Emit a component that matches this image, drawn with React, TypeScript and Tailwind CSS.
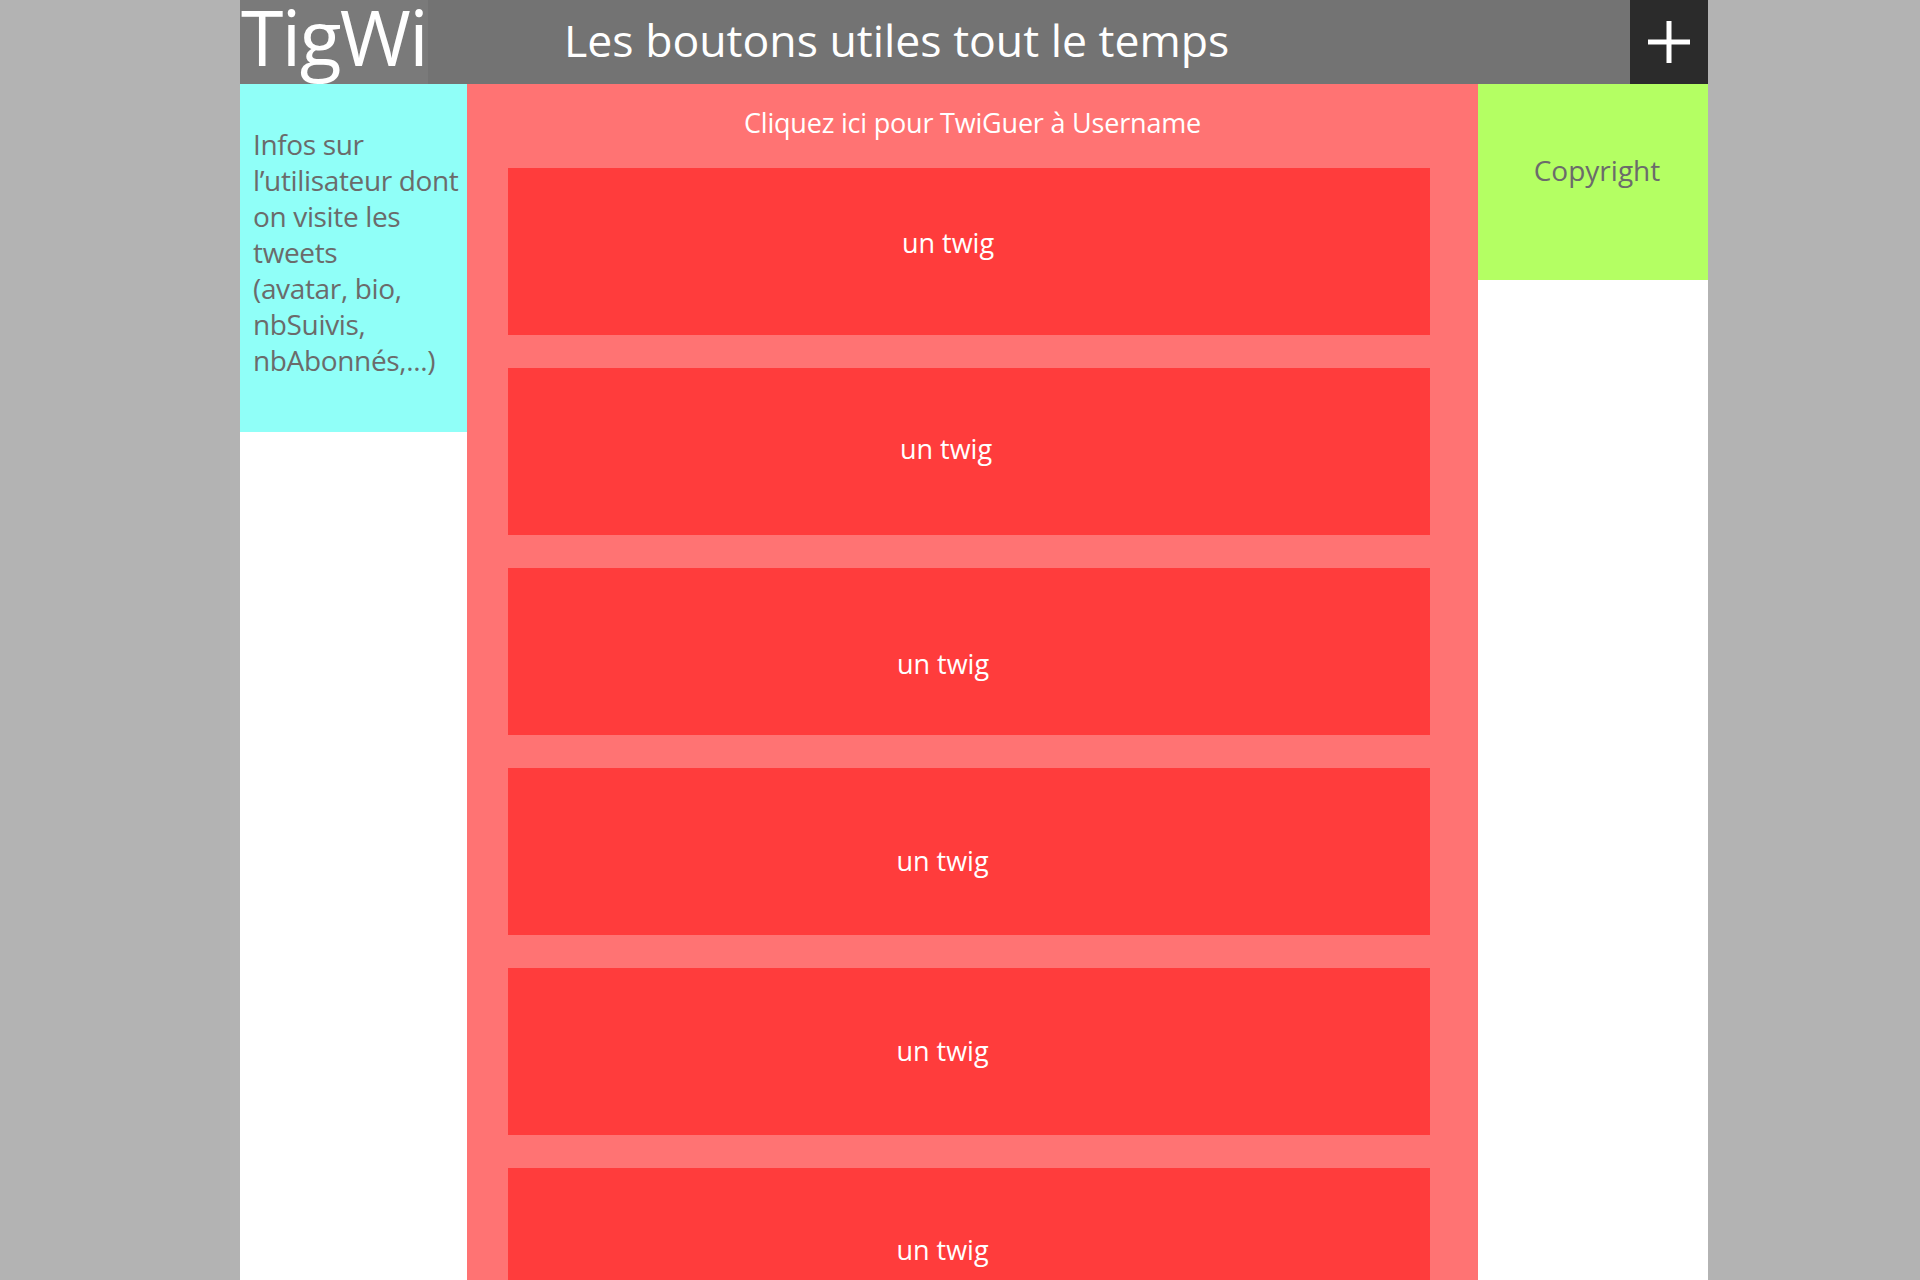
import React from "react";

const twigs = [
  { pt: "pt-[57px]", pr: "pr-[42px]" },
  { pt: "pt-[63px]", pr: "pr-[46px]" },
  { pt: "pt-[78px]", pr: "pr-[52px]" },
  { pt: "pt-[75px]", pr: "pr-[53px]" },
  { pt: "pt-[65px]", pr: "pr-[53px]" },
  { pt: "pt-[64px]", pr: "pr-[53px]" },
];

export default function App() {
  return (
    <div
      className="w-[1920px] h-[1280px] overflow-hidden bg-[#b3b3b3]"
      style={{ fontFamily: '"Open Sans", "Noto Sans", sans-serif' }}
    >
      <div className="ml-[240px] w-[1468px] h-[1280px] flex flex-col">
        {/* Header */}
        <div className="h-[84px] flex bg-[#737373] shrink-0">
          <div className="w-[188px] bg-[#7a7a7a] flex items-center pb-[10px] pl-[1px]">
            <span className="text-white text-[77px] leading-[74px] tracking-[-1.6px]">TigWi</span>
          </div>
          <div className="flex-1 flex items-center pl-[136px] pb-[4px]">
            <span className="text-white text-[44.6px] leading-none">Les boutons utiles tout le temps</span>
          </div>
          <div className="w-[78px] bg-[#2b2b2b] flex items-center justify-center">
            <svg width="42" height="42" viewBox="0 0 42 42">
              <rect x="18.5" y="0" width="5" height="42" fill="#ffffff" />
              <rect x="0" y="18.5" width="42" height="5" fill="#ffffff" />
            </svg>
          </div>
        </div>
        {/* Body */}
        <div className="flex flex-1 min-h-0">
          <div className="w-[227px] shrink-0 flex flex-col">
            <div className="h-[348px] bg-[#90fff8] pl-[13px] pt-[42px] text-[#6b6b6b] text-[28px] leading-[36px] tracking-[-0.35px]">
              <div>Infos sur</div>
              <div>l’utilisateur dont</div>
              <div>on visite les</div>
              <div>tweets</div>
              <div>(avatar, bio,</div>
              <div>nbSuivis,</div>
              <div>nbAbonnés,...)</div>
            </div>
            <div className="flex-1 bg-white" />
          </div>
          <div className="w-[1011px] shrink-0 bg-[#ff7373] flex flex-col pl-[41px] pr-[48px] pt-[21px] overflow-hidden">
            <div className="text-white text-[27px] leading-[36px] text-center pl-[7px] tracking-[-0.2px]">
              Cliquez ici pour TwiGuer à Username
            </div>
            <div className="mt-[27px] flex flex-col gap-[33px]">
              {twigs.map((t, i) => (
                <div
                  key={i}
                  className={`h-[167px] shrink-0 bg-[#ff3c3c] text-white text-[27px] leading-[36px] text-center ${t.pt} ${t.pr}`}
                >
                  un twig
                </div>
              ))}
            </div>
          </div>
          <div className="w-[230px] shrink-0 flex flex-col">
            <div className="h-[196px] bg-[#b4ff63] flex justify-center pt-[68px] pl-[8px] text-[#6b6b6b] text-[28px] leading-[36px]">
              Copyright
            </div>
            <div className="flex-1 bg-white" />
          </div>
        </div>
      </div>
    </div>
  );
}
